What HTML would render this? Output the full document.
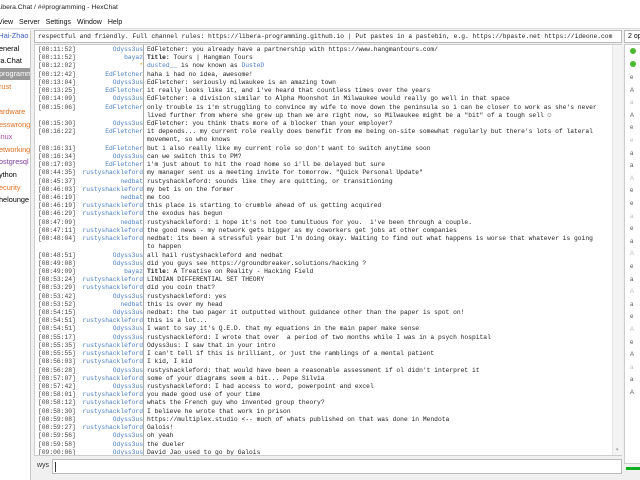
<!DOCTYPE html>
<html><head><meta charset="utf-8"><style>
*{margin:0;padding:0;box-sizing:border-box}
body{width:640px;height:480px;overflow:hidden;background:#f0f0f0;font-family:"Liberation Sans",sans-serif;position:relative}
.abs{position:absolute}
#title{left:-3px;top:0;width:643px;height:16px;background:#fff;font-size:6.8px;line-height:16px;color:#222}
#menu{left:-2px;top:16px;width:642px;height:13px;background:#fff;font-size:7px;line-height:13px;color:#111}
#menu span{margin-right:6px}
#tree{left:0;top:30px;width:31px;height:450px;background:#fff;font-size:7.3px;overflow:hidden;white-space:nowrap;border-right:1px solid #ccc}
#tree div{position:absolute;left:-1px;height:12px;line-height:12px}
.o{color:#e07020}
#topic{left:34px;top:30px;width:588px;height:13px;background:#fff;border:1px solid #bbb;font:6.3px/11px "Liberation Mono",monospace;padding-left:3px;white-space:nowrap;overflow:hidden;color:#222}
#chat{left:34px;top:44px;width:588px;height:412px;background:#fff;border:1px solid #ccc;overflow:hidden}
#sb{left:612px;top:45px;width:10px;height:410px;background:#f4f4f4;border-left:1px solid #e6e6e6}
#sep{left:143px;top:45px;width:1px;height:410px;background:#aaa}
.r{position:absolute;left:0;height:8.22px;font:6.3px/8.22px "Liberation Mono",monospace;white-space:pre;color:#222}
.t{position:absolute;left:3px;color:#444}
.nw{position:absolute;left:0;width:108px;text-align:right}
.m{position:absolute;left:112px}
#input{left:52px;top:459px;width:570px;height:15px;background:#fff;border:1px solid #bbb}
#wys{left:37px;top:462px;font-size:7px;color:#333}
#op{left:624px;top:30px;width:18px;height:13px;background:#fff;border:1px solid #bbb;font-size:7px;line-height:11px;padding-left:3px;white-space:nowrap;overflow:hidden}
#ul{left:624px;top:44px;width:18px;height:420px;background:#fff;border:1px solid #ccc;overflow:hidden}
.dot{position:absolute;left:5px;width:6px;height:6px;border-radius:50%;background:#4cb830}
.u{position:absolute;left:5px;font-size:6px;color:#555}
</style></head><body>
<div id="title" class="abs">Libera.Chat / ##programming - HexChat</div>
<div id="menu" class="abs"><span>View</span><span>Server</span><span>Settings</span><span>Window</span><span>Help</span></div>
<div style="left:0;top:28px;width:640px;height:1px;background:#ddd" class="abs"></div>
<div id="tree" class="abs">
<div style="top:0;left:-4px;color:#4060c0">-Hai-Zhao</div>
<div style="top:13px">eneral</div>
<div style="top:25px;left:-2px">ra.Chat</div>
<div style="top:38px;background:#999;color:#fff;width:31px">programming</div>
<div style="top:51px" class="o">rust</div>
<div style="top:76px" class="o">ardware</div>
<div style="top:89px" class="o">esswrong</div>
<div style="top:101px;color:#a050a0">inux</div>
<div style="top:114px" class="o">etworking</div>
<div style="top:126px;color:#8040a0">ostgresql</div>
<div style="top:139px">ython</div>
<div style="top:152px" class="o">ecurity</div>
<div style="top:164px">helounge</div>
</div>
<div id="topic" class="abs">respectful and friendly. Full channel rules: https://libera-programming.github.io | Put pastes in a pastebin, e.g. https://bpaste.net https://ideone.com</div>
<div id="chat" class="abs"><div id="rows"></div></div>
<div id="sep" class="abs"></div>
<div id="sb" class="abs"><div style="position:absolute;left:3px;bottom:2px;font-size:5px;color:#999">▾</div></div>
<div id="wys" class="abs">wys</div>
<div id="input" class="abs"><div style="position:absolute;left:2px;top:2px;width:1px;height:10px;background:#333"></div></div>
<div id="op" class="abs">2 ops</div>
<div id="ul" class="abs">
<div class="dot" style="top:3px"></div><div class="dot" style="top:16px"></div>
</div>
<div class="abs" style="left:626px;top:467px;width:14px;height:3px;background:#10b020"></div>
<script>
var L=[
["08:11:52","Odyss3us","EdFletcher: you already have a partnership with https://www.hangmantours.com/"],
["08:11:52","bayaz","<b>Title:</b> Tours | Hangman Tours"],
["08:12:02","*","<span style='color:#4a7fc0'>dusted__</span> is now known as <span style='color:#4a7fc0'>DusteD</span>"],
["08:12:42","EdFletcher","haha i had no idea, awesome!"],
["08:13:04","Odyss3us","EdFletcher: seriously milwaukee is an amazing town"],
["08:13:25","EdFletcher","it really looks like it, and i've heard that countless times over the years"],
["08:14:09","Odyss3us","EdFletcher: a division similar to Alpha Moonshot in Milwaukee would really go well in that space"],
["08:15:06","EdFletcher","only trouble is i'm struggling to convince my wife to move down the peninsula so i can be closer to work as she's never"],
["","","lived further from where she grew up than we are right now, so Milwaukee might be a \"bit\" of a tough sell ☺"],
["08:15:30","Odyss3us","EdFletcher: you think thats more of a blocker than your employer?"],
["08:16:22","EdFletcher","it depends... my current role really does benefit from me being on-site somewhat regularly but there's lots of lateral"],
["","","movement, so who knows"],
["08:16:31","EdFletcher","but i also really like my current role so don't want to switch anytime soon"],
["08:16:34","Odyss3us","can we switch this to PM?"],
["08:17:03","EdFletcher","i'm just about to hit the road home so i'll be delayed but sure"],
["08:44:35","rustyshackleford","my manager sent us a meeting invite for tomorrow. \"Quick Personal Update\""],
["08:45:37","nedbat","rustyshackleford: sounds like they are quitting, or transitioning"],
["08:46:03","rustyshackleford","my bet is on the former"],
["08:46:19","nedbat","me too"],
["08:46:19","rustyshackleford","this place is starting to crumble ahead of us getting acquired"],
["08:46:29","rustyshackleford","the exodus has begun"],
["08:47:09","nedbat","rustyshackleford: i hope it's not too tumultuous for you.  i've been through a couple."],
["08:47:11","rustyshackleford","the good news - my network gets bigger as my coworkers get jobs at other companies"],
["08:48:04","rustyshackleford","nedbat: its been a stressful year but I'm doing okay. Waiting to find out what happens is worse that whatever is going"],
["","","to happen"],
["08:48:51","Odyss3us","all hail rustyshackleford and nedbat"],
["08:49:08","Odyss3us","did you guys see https://groundbreaker.solutions/hacking ?"],
["08:49:09","bayaz","<b>Title:</b> A Treatise on Reality - Hacking Field"],
["08:53:24","rustyshackleford","LINDIAN DIFFERENTIAL SET THEORY"],
["08:53:29","rustyshackleford","did you coin that?"],
["08:53:42","Odyss3us","rustyshackleford: yes"],
["08:53:52","nedbat","this is over my head"],
["08:54:15","Odyss3us","nedbat: the two pager it outputted without guidance other than the paper is spot on!"],
["08:54:51","rustyshackleford","this is a lot..."],
["08:54:51","Odyss3us","I want to say it's Q.E.D. that my equations in the main paper make sense"],
["08:55:17","Odyss3us","rustyshackleford: I wrote that over  a period of two months while I was in a psych hospital"],
["08:55:35","rustyshackleford","Odyss3us: I saw that in your intro"],
["08:55:55","rustyshackleford","I can't tell if this is brilliant, or just the ramblings of a mental patient"],
["08:56:03","rustyshackleford","I kid, I kid"],
["08:56:28","Odyss3us","rustyshackleford: that would have been a reasonable assessment if ol didn't interpret it"],
["08:57:07","rustyshackleford","some of your diagrams seem a bit... Pepe Silvia"],
["08:57:42","Odyss3us","rustyshackleford: I had access to word, powerpoint and excel"],
["08:58:01","rustyshackleford","you made good use of your time"],
["08:58:12","rustyshackleford","whats the French guy who invented group theory?"],
["08:58:30","rustyshackleford","I believe he wrote that work in prison"],
["08:59:08","Odyss3us","https://multiplex.studio <-- much of whats published on that was done in Mendota"],
["08:59:27","rustyshackleford","Galois!"],
["08:59:56","Odyss3us","oh yeah"],
["08:59:58","Odyss3us","the dueler"],
["09:00:06","Odyss3us","David Jao used to go by Galois"]];
var h="";
L.forEach(function(l,i){
 var nc=l[1]=="*"?"color:#e0a000":"color:#4a7fc0";
 h+="<div class='r' style='top:"+(1+i*8.22)+"px;width:586px'>"+(l[0]?"<span class='t'>["+l[0]+"]</span>":"")+"<span class='nw' style='"+nc+"'>"+l[1]+"</span><span class='m'>"+l[2]+"</span></div>";
});
document.getElementById("rows").innerHTML=h;
var u="";var ch="eAaAeeaaAeeaeaAeaAaeAeAaaA";
for(var i=0;i<26;i++){u+="<div class='u' style='top:"+(30+i*12.6)+"px;color:"+(i%3==2?'#bbb':'#555')+"'>"+ch[i]+"</div>";}
document.getElementById("ul").innerHTML+=u;
</script>
</body></html>
